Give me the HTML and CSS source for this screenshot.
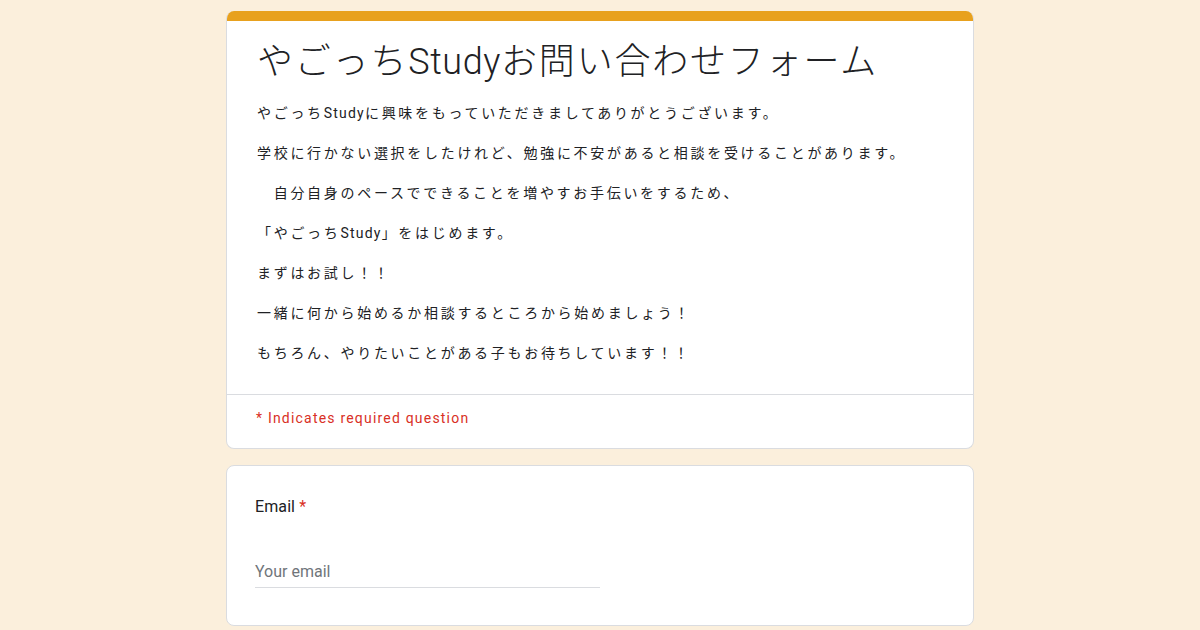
FILE: index.html
```html
<!DOCTYPE html>
<html lang="ja">
<head>
<meta charset="utf-8">
<title>やごっちStudyお問い合わせフォーム</title>
<link rel="stylesheet" href="styles.css">
</head>
<body>
<main class="form">
  <section class="card header-card">
    <div class="accent"></div>
    <div class="header-body">
      <h1 class="title">やごっち<span class="latin">Study</span>お問い合わせフォーム</h1>
      <div class="desc">
        <p>やごっち<span class="latin">Study</span>に興味をもっていただきましてありがとうございます。</p>
        <p>学校に行かない選択をしたけれど、勉強に不安があると相談を受けることがあります。</p>
        <p>　自分自身のペースでできることを増やすお手伝いをするため、</p>
        <p>「やごっち<span class="latin">Study</span>」をはじめます。</p>
        <p>まずはお試し！！</p>
        <p>一緒に何から始めるか相談するところから始めましょう！</p>
        <p>もちろん、やりたいことがある子もお待ちしています！！</p>
      </div>
    </div>
    <div class="required-note">* Indicates required question</div>
  </section>
  <section class="card question-card">
    <div class="q-label">Email <span class="star">*</span></div>
    <div class="q-input"><span class="placeholder">Your email</span></div>
  </section>
</main>
</body>
</html>
```
FILE: styles.css
```css
html, body {
  margin: 0;
  padding: 0;
}
body {
  background: #fbefdc;
  font-family: Roboto, "Noto Sans CJK JP", sans-serif;
  color: #202124;
}
.form {
  width: 748px;
  margin: 11px auto 0;
  display: flex;
  flex-direction: column;
  gap: 16px;
}
.card {
  background: #fff;
  border: 1px solid #dadce0;
  border-radius: 8px;
  box-sizing: border-box;
}
.header-card {
  border-top: none;
  overflow: hidden;
}
.accent {
  height: 10px;
  background: #e8a11e;
}
.header-body {
  padding: 17px 30px 21px;
  border-bottom: 1px solid #dadce0;
}
.title {
  margin: 0;
  font-family: Roboto, "Noto Sans CJK JP", sans-serif;
  font-weight: 300;
  font-size: 36px;
  line-height: 48px;
  color: #202124;
  letter-spacing: 1.8px;
}
.title .latin {
  letter-spacing: 0.6px;
}
.desc {
  margin-top: 7px;
}
.desc p {
  margin: 0;
  font-size: 14px;
  line-height: 40px;
  letter-spacing: 2.7px;
  color: #202124;
}
.desc .latin {
  letter-spacing: 1.2px;
}
.required-note {
  padding: 13px 29px 20px;
  font-size: 14px;
  line-height: 20px;
  color: #d93025;
  letter-spacing: 1.2px;
}
.question-card {
  padding: 29px 28px 38px;
  height: 161px;
}
.q-label {
  font-size: 16px;
  line-height: 24px;
  color: #202124;
  letter-spacing: 0.1px;
}
.star {
  color: #d93025;
}
.q-input {
  margin-top: 41px;
  width: 345px;
  border-bottom: 1px solid #dadce0;
  padding-bottom: 3px;
}
.placeholder {
  font-size: 16px;
  line-height: 24px;
  color: #70757a;
}
```
